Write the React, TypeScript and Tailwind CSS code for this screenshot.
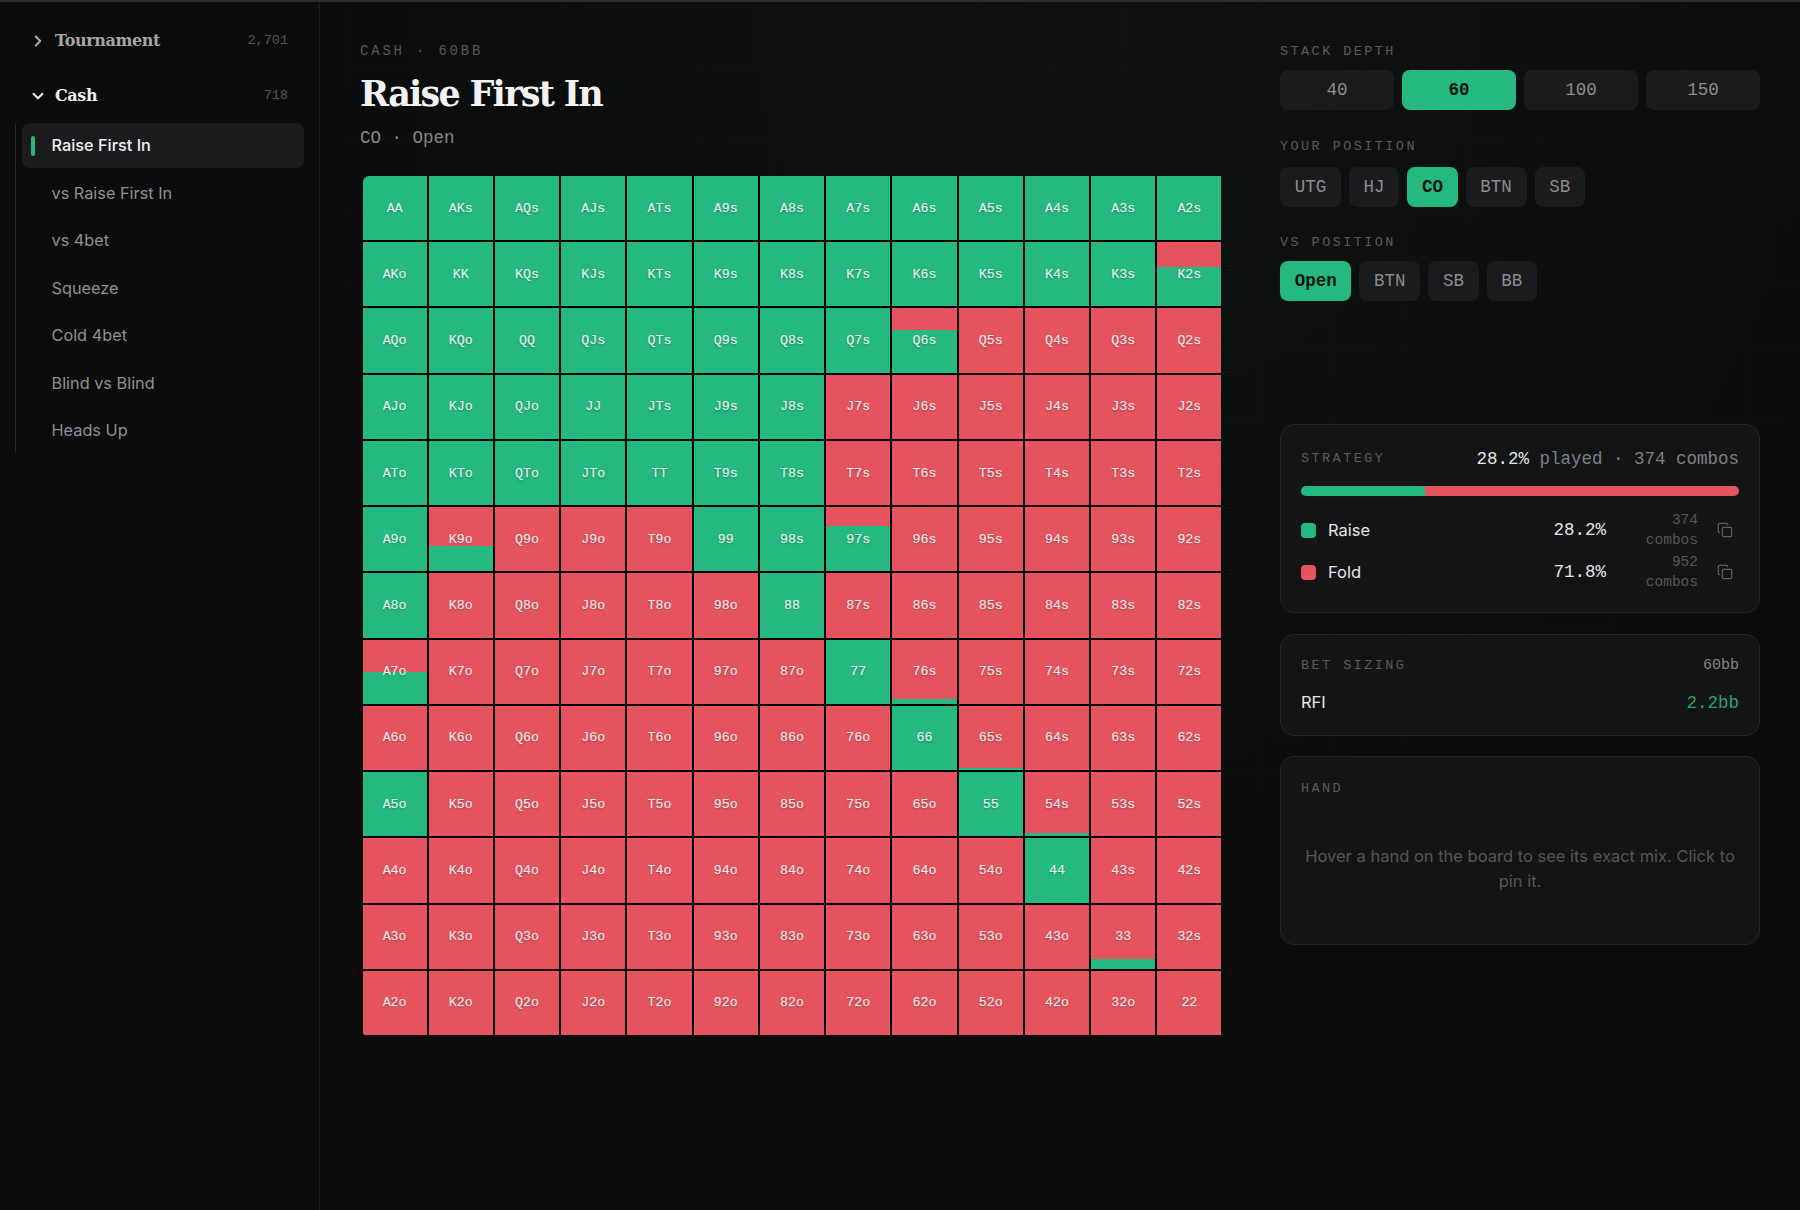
import { ChevronDown, ChevronRight, Copy } from "lucide-react";

const RANKS = ["A", "K", "Q", "J", "T", "9", "8", "7", "6", "5", "4", "3", "2"];

// how many cells are pure raise, per row, by hand name
const RAISE = new Set([
  "AA", "AKs", "AQs", "AJs", "ATs", "A9s", "A8s", "A7s", "A6s", "A5s", "A4s", "A3s", "A2s",
  "AKo", "KK", "KQs", "KJs", "KTs", "K9s", "K8s", "K7s", "K6s", "K5s", "K4s", "K3s",
  "AQo", "KQo", "QQ", "QJs", "QTs", "Q9s", "Q8s", "Q7s",
  "AJo", "KJo", "QJo", "JJ", "JTs", "J9s", "J8s",
  "ATo", "KTo", "QTo", "JTo", "TT", "T9s", "T8s",
  "A9o", "99", "98s",
  "A8o", "88",
  "77",
  "66",
  "A5o", "55",
  "44",
]);

// mixed hands: percent of the cell that is raise, filled from the bottom
const MIXED: Record<string, number> = {
  K2s: 61,
  Q6s: 66,
  K9o: 39,
  "97s": 71,
  A7o: 50,
  "76s": 7,
  "65s": 4,
  "54s": 5,
  "33": 15,
};

const SPOTS = ["Raise First In", "vs Raise First In", "vs 4bet", "Squeeze", "Cold 4bet", "Blind vs Blind", "Heads Up"];

const handName = (row: number, col: number) => {
  if (row === col) return RANKS[row] + RANKS[col];
  if (col > row) return RANKS[row] + RANKS[col] + "s";
  return RANKS[col] + RANKS[row] + "o";
};

const Cell: React.FC<{ hand: string }> = ({ hand }) => {
  const mix = MIXED[hand];
  const raise = RAISE.has(hand);
  return (
    <div className={`relative flex items-center justify-center ${raise ? "bg-[#25b97f]" : "bg-[#e5545e]"}`}>
      {mix !== undefined && (
        <div className="absolute inset-x-0 bottom-0 bg-[#25b97f]" style={{ height: `${mix}%` }} />
      )}
      <span className="relative pt-[1px] font-['Liberation_Mono',monospace] text-[13.3px] text-white/85 [-webkit-text-stroke:0.25px_rgba(255,255,255,0.6)] [text-shadow:0_1px_2px_rgba(0,0,0,0.35)]">
        {hand}
      </span>
    </div>
  );
};

const Chip: React.FC<{ label: string; active?: boolean; wide?: boolean }> = ({ label, active, wide }) => (
  <div
    className={`flex h-10 items-center justify-center rounded-lg text-[17.5px] font-['Liberation_Mono',monospace] ${
      wide ? "flex-1" : "px-[14.7px]"
    } ${active ? "bg-[#25b97f] font-bold text-[#07140e]" : "bg-[#1a1b1e] text-[#8b8c90]"}`}
  >
    {label}
  </div>
);

const Label: React.FC<{ text: string }> = ({ text }) => (
  <div className="font-['Liberation_Mono',monospace] text-[13.5px] leading-4 tracking-[0.18em] text-[#5a5b5f] whitespace-pre">
    {text}
  </div>
);

const StrategyRow: React.FC<{ name: string; swatch: string; pct: string; combos: string }> = ({ name, swatch, pct, combos }) => (
  <div className="flex h-[42px] items-center">
    <div className={`h-[15px] w-[15px] rounded-[4px] ${swatch}`} />
    <span className="ml-3 flex-1 text-[16.5px] text-[#e6e6e8]">{name}</span>
    <span className="font-['Liberation_Mono',monospace] text-[17.5px] text-[#e6e6e8]">{pct}</span>
    <span className="ml-6 w-[68px] text-right font-['Liberation_Mono',monospace] text-[14.5px] leading-5 text-[#56575b]">
      {combos} combos
    </span>
    <Copy size={16} strokeWidth={1.75} className="ml-[19px] mr-[6px] text-[#5f6064]" />
  </div>
);

export default function App() {
  return (
    <div className="relative flex h-[1210px] w-[1800px] overflow-hidden border-t-2 border-[#2a2d2d] bg-[#0b0b0c] font-['Inter',sans-serif]">
      {/* faint backdrop: green glow from the top and a 70px grid */}
      <div className="pointer-events-none absolute inset-0 bg-[radial-gradient(ellipse_at_62%_0%,rgba(37,185,127,0.045),transparent_55%)]" />
      <div className="pointer-events-none absolute inset-x-0 -top-[2px] bottom-0 bg-[linear-gradient(rgba(255,255,255,0.015)_1px,transparent_1px),linear-gradient(90deg,rgba(255,255,255,0.015)_1px,transparent_1px)] bg-[size:70px_70px] [mask-image:linear-gradient(to_bottom,black_45%,transparent_85%)]" />

      <aside className="relative w-[320px] shrink-0 border-r border-[#1b1c1e] pr-[15px] pt-[21px]">
        <div className="flex h-9 items-center pl-[29px] pr-[16px]">
          <ChevronRight size={18} strokeWidth={2.75} className="text-[#a9aaad]" />
          <span className="ml-[8px] flex-1 font-['DejaVu_Serif',serif] text-[16px] font-bold tracking-[-0.025em] text-[#a5a6a9]">
            Tournament
          </span>
          <span className="font-['Liberation_Mono',monospace] text-[13.5px] text-[#55565a]">2,701</span>
        </div>
        <div className="mt-[19px] flex h-9 items-center pl-[29px] pr-[16px]">
          <ChevronDown size={18} strokeWidth={2.75} className="text-[#e8e8ea]" />
          <span className="ml-[8px] flex-1 font-['DejaVu_Serif',serif] text-[16px] font-bold tracking-[-0.025em] text-[#f0f0f2]">
            Cash
          </span>
          <span className="font-['Liberation_Mono',monospace] text-[13.5px] text-[#55565a]">718</span>
        </div>
        <div className="ml-[15px] mt-[9px] flex flex-col gap-[2.5px] border-l border-[#26272a] pl-[6px]">
          {SPOTS.map((spot, i) => (
            <div
              key={spot}
              className={`relative flex h-[45px] items-center rounded-lg pl-[29.5px] text-[16.3px] ${
                i === 0 ? "bg-[#1a1b1e] font-medium text-[#f0f0f2]" : "text-[#8f9094]"
              }`}
            >
              {i === 0 && <div className="absolute left-[9px] top-[13px] h-5 w-1 rounded-full bg-[#25b97f]" />}
              {spot}
            </div>
          ))}
        </div>
      </aside>

      <main className="relative w-[960px] shrink-0 pl-10 pt-[41px]">
        <div className="font-['Liberation_Mono',monospace] text-sm leading-4 tracking-[0.2em] text-[#55565a] whitespace-pre">
          CASH · 60BB
        </div>
        <h1 className="mt-[12px] font-['DejaVu_Serif',serif] text-[35px] leading-[46px] font-bold tracking-[-0.05em] text-[#f2f2f3]">
          Raise First In
        </h1>
        <div className="mt-[9px] font-['Liberation_Mono',monospace] text-[17.5px] leading-6 text-[#85868a] whitespace-pre">
          CO · Open
        </div>
        <div className="ml-[2.5px] mt-[26px] grid h-[859px] w-[859px] grid-cols-[repeat(13,1fr)] grid-rows-[repeat(13,1fr)] gap-[2px] overflow-hidden rounded-tl-md rounded-bl-[2px] bg-black">
          {RANKS.map((_, row) => RANKS.map((_, col) => <Cell key={`${row}-${col}`} hand={handName(row, col)} />))}
        </div>
      </main>

      <section className="relative w-[480px] shrink-0 pt-[42px]">
        <Label text="STACK DEPTH" />
        <div className="mt-[10px] flex gap-2">
          {["40", "60", "100", "150"].map((s) => (
            <Chip key={s} label={s} wide active={s === "60"} />
          ))}
        </div>

        <div className="mt-[29px]">
          <Label text="YOUR POSITION" />
        </div>
        <div className="mt-[12px] flex gap-2">
          {["UTG", "HJ", "CO", "BTN", "SB"].map((s) => (
            <Chip key={s} label={s} active={s === "CO"} />
          ))}
        </div>

        <div className="mt-[28px]">
          <Label text="VS POSITION" />
        </div>
        <div className="mt-[10px] flex gap-2">
          {["Open", "BTN", "SB", "BB"].map((s) => (
            <Chip key={s} label={s} active={s === "Open"} />
          ))}
        </div>

        <div className="mt-[123px] h-[189px] rounded-[14px] border border-[#232427] bg-[#131416] px-5 pt-[22px]">
          <div className="flex items-center justify-between">
            <Label text="STRATEGY" />
            <div className="font-['Liberation_Mono',monospace] text-[17.5px] leading-6 text-[#7f8084]">
              <span className="text-[#e6e6e8]">28.2%</span> played · 374 combos
            </div>
          </div>
          <div className="mt-[15px] flex h-[10px] overflow-hidden rounded-full">
            <div className="w-[28.2%] bg-[#25b97f]" />
            <div className="flex-1 bg-[#e5545e]" />
          </div>
          <div className="mt-[13px]">
            <StrategyRow name="Raise" swatch="bg-[#25b97f]" pct="28.2%" combos="374" />
            <StrategyRow name="Fold" swatch="bg-[#e5545e]" pct="71.8%" combos="952" />
          </div>
        </div>

        <div className="mt-[21px] h-[102px] rounded-[14px] border border-[#232427] bg-[#131416] px-5 pt-[20px]">
          <div className="flex items-center justify-between">
            <Label text="BET SIZING" />
            <span className="font-['Liberation_Mono',monospace] text-[15px] text-[#85868a]">60bb</span>
          </div>
          <div className="mt-[12px] flex items-center justify-between">
            <span className="text-[16.5px] text-[#e6e6e8]">RFI</span>
            <span className="font-['Liberation_Mono',monospace] text-[17.5px] text-[#25a373]">2.2bb</span>
          </div>
        </div>

        <div className="mt-[20px] h-[189px] rounded-[14px] border border-[#232427] bg-[#131416] px-5 pt-[24px]">
          <Label text="HAND" />
          <p className="mt-[47px] text-center text-[16.5px] leading-[25px] text-[#55565a]">
            Hover a hand on the board to see its exact mix. Click to pin it.
          </p>
        </div>
      </section>
    </div>
  );
}
